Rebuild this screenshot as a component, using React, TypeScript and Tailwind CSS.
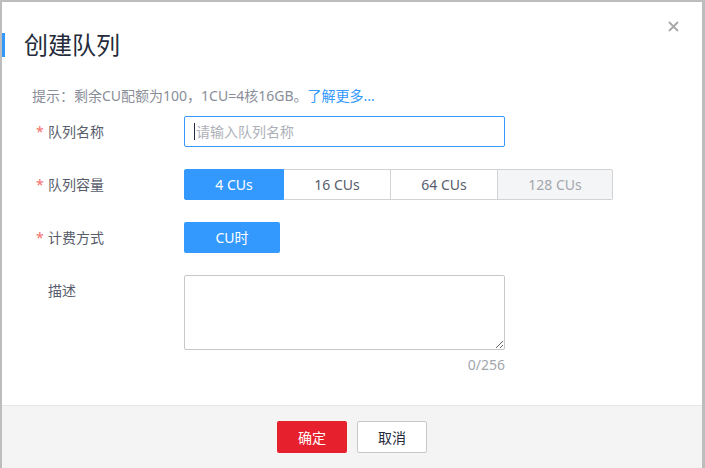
import { useState } from 'react'

const font = { fontFamily: '"Noto Sans", "Noto Sans CJK SC", sans-serif' }

const sizes = [
    { label: '4 CUs', w: 'w-[100px]' },
    { label: '16 CUs', w: 'w-[107px]' },
    { label: '64 CUs', w: 'w-[107px]' },
    { label: '128 CUs', w: 'w-[115px]', disabled: true },
]

function Label({ text, required }: { text: string; required?: boolean }) {
    return (
        <div className="w-[152px] shrink-0 flex items-center h-[31px] pl-[4px] text-[14px] text-[#575d6c]">
            <span className={`w-[12px] text-[#f66f6a] ${required ? '' : 'invisible'}`}>*</span>
            <span>{text}</span>
        </div>
    )
}

export default function App() {
    const [size, setSize] = useState(0)

    return (
        <div className="w-[705px] h-[468px] overflow-hidden bg-[#bdbdbd] pt-[2px] pl-[2px] pr-[3px] flex" style={font}>
            {/* Dialog */}
            <div className="flex-1 bg-white flex flex-col">
                {/* Header */}
                <div className="flex items-start pt-[30px] relative">
                    <div className="w-[3px] h-[24px] mt-[1px] bg-[#3399ff]" />
                    <h1 className="ml-[19px] text-[24px] leading-[26px] text-[#252b3a]">创建队列</h1>
                    <button className="absolute right-[23px] top-[19px] w-[11px] h-[11px] text-[#a8a8a8]">
                        <svg viewBox="0 0 11 11" width="11" height="11" stroke="currentColor" strokeWidth="1.8">
                            <path d="M1 1 L10 10 M10 1 L1 10" />
                        </svg>
                    </button>
                </div>

                {/* Body */}
                <div className="flex-1 pl-[30px] pt-[28px]">
                    <p className="text-[14px] leading-[20px] text-[#8a8e99]">
                        提示：剩余CU配额为100，1CU=4核16GB。<span className="text-[#3399ff]">了解更多...</span>
                    </p>

                    <div className="flex flex-col gap-[22px] mt-[10px]">
                        <div className="flex">
                            <Label text="队列名称" required />
                            <div className="w-[321px] h-[31px] border border-[#3399ff] rounded-[2px] flex items-center px-[9px] text-[14px] text-[#adb0b8]">
                                <span className="w-px h-[17px] bg-[#252b3a] mr-px" />
                                请输入队列名称
                            </div>
                        </div>

                        <div className="flex">
                            <Label text="队列容量" required />
                            <div className="flex h-[31px]">
                                {sizes.map((s, i) => (
                                    <button
                                        key={s.label}
                                        onClick={() => !s.disabled && setSize(i)}
                                        className={`${s.w} h-[31px] text-[14px] border ${i > 0 ? 'border-l-0' : ''} ${
                                            size === i
                                                ? 'bg-[#3399ff] border-[#3399ff] text-white'
                                                : s.disabled
                                                  ? 'bg-[#f4f5f6] border-[#d3d3d3] text-[#a3a6ad]'
                                                  : 'bg-white border-[#d3d3d3] text-[#575d6c]'
                                        } ${i === 0 ? 'rounded-l-[2px]' : ''} ${i === sizes.length - 1 ? 'rounded-r-[2px]' : ''}`}
                                    >
                                        {s.label}
                                    </button>
                                ))}
                            </div>
                        </div>

                        <div className="flex">
                            <Label text="计费方式" required />
                            <button className="w-[96px] h-[31px] rounded-[2px] bg-[#3399ff] text-white text-[14px]">CU时</button>
                        </div>

                        <div className="flex">
                            <Label text="描述" />
                            <div className="flex flex-col items-end">
                                <textarea className="w-[321px] h-[75px] border border-[#c8c8c8] rounded-[2px] outline-none resize-y" />
                                <span className="mt-[6px] text-[14px] leading-[18px] text-[#a3a6ad]">0/256</span>
                            </div>
                        </div>
                    </div>
                </div>

                {/* Footer */}
                <div className="h-[63px] shrink-0 bg-[#f4f4f4] border-t border-[#e6e6e6] flex items-center justify-center gap-[10px]">
                    <button className="w-[70px] h-[32px] rounded-[2px] bg-[#e6212d] text-white text-[14px]">确定</button>
                    <button className="w-[70px] h-[32px] rounded-[2px] bg-white border border-[#c8c8c8] text-[#252b3a] text-[14px]">取消</button>
                </div>
            </div>
        </div>
    )
}
